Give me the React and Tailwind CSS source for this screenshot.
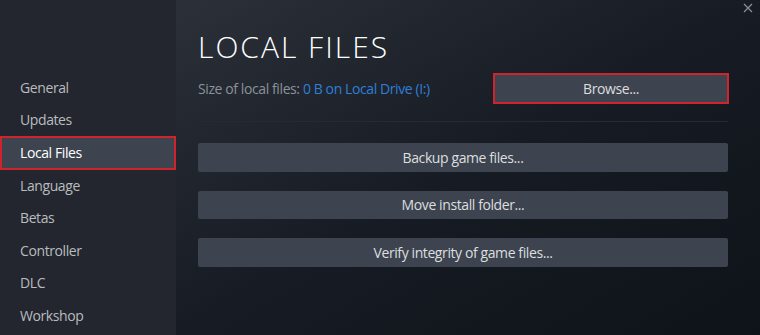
import React from 'react';

const navItems = ['General', 'Updates', 'Local Files', 'Language', 'Betas', 'Controller', 'DLC', 'Workshop'];

const actions = ['Backup game files...', 'Move install folder...', 'Verify integrity of game files...'];

const App = () => {
  return (
    <div className="flex w-[760px] h-[335px] overflow-hidden font-['Open_Sans','Noto_Sans',sans-serif] text-[14px]">
      <div className="w-[176px] shrink-0 bg-[#23262e] pt-[71px]">
        {navItems.map((item) =>
          item === 'Local Files' ? (
            <div
              key={item}
              className="h-[34px] -my-[0.7px] flex items-center pl-[18px] bg-[#3d4450] border-2 border-[#d0242c] text-white tracking-[-0.4px]"
            >
              {item}
            </div>
          ) : (
            <div key={item} className="h-[32.6px] flex items-center pl-5 text-[#b8bcbf] tracking-[-0.4px]">
              {item}
            </div>
          )
        )}
      </div>

      <div className="relative flex-1 bg-linear-to-br from-[#2b3039] via-[#171c24] to-[#0e1319] pl-[22px] pr-8 pt-[30px]">
        <svg className="absolute right-[7px] top-[3px]" width="10" height="10" viewBox="0 0 10 10">
          <path d="M1 1 L9 9 M9 1 L1 9" stroke="#8a9099" strokeWidth="1.2" />
        </svg>

        <h1 className="text-[30px] leading-[34px] font-light tracking-[2px] text-white">LOCAL FILES</h1>

        <div className="mt-[9px] flex items-center justify-between">
          <p className="text-[#8b929a] tracking-[-0.4px]">
            Size of local files: <span className="text-[#2f7fd8]">0 B on Local Drive (I:)</span>
          </p>
          <button className="w-[236px] h-[31px] -mr-px bg-[#3d4450] border-2 border-[#d0242c] text-[#dcdedf] tracking-[-0.4px]">
            Browse...
          </button>
        </div>

        <div className="mt-[17px] h-px bg-[#262b33]" />

        <div className="mt-[21px] flex flex-col gap-[19px]">
          {actions.map((label) => (
            <button
              key={label}
              className="h-[28.5px] rounded-[2px] bg-[#3d4450] text-[#dcdedf] tracking-[-0.4px]"
            >
              {label}
            </button>
          ))}
        </div>
      </div>
    </div>
  );
};

export default App;
